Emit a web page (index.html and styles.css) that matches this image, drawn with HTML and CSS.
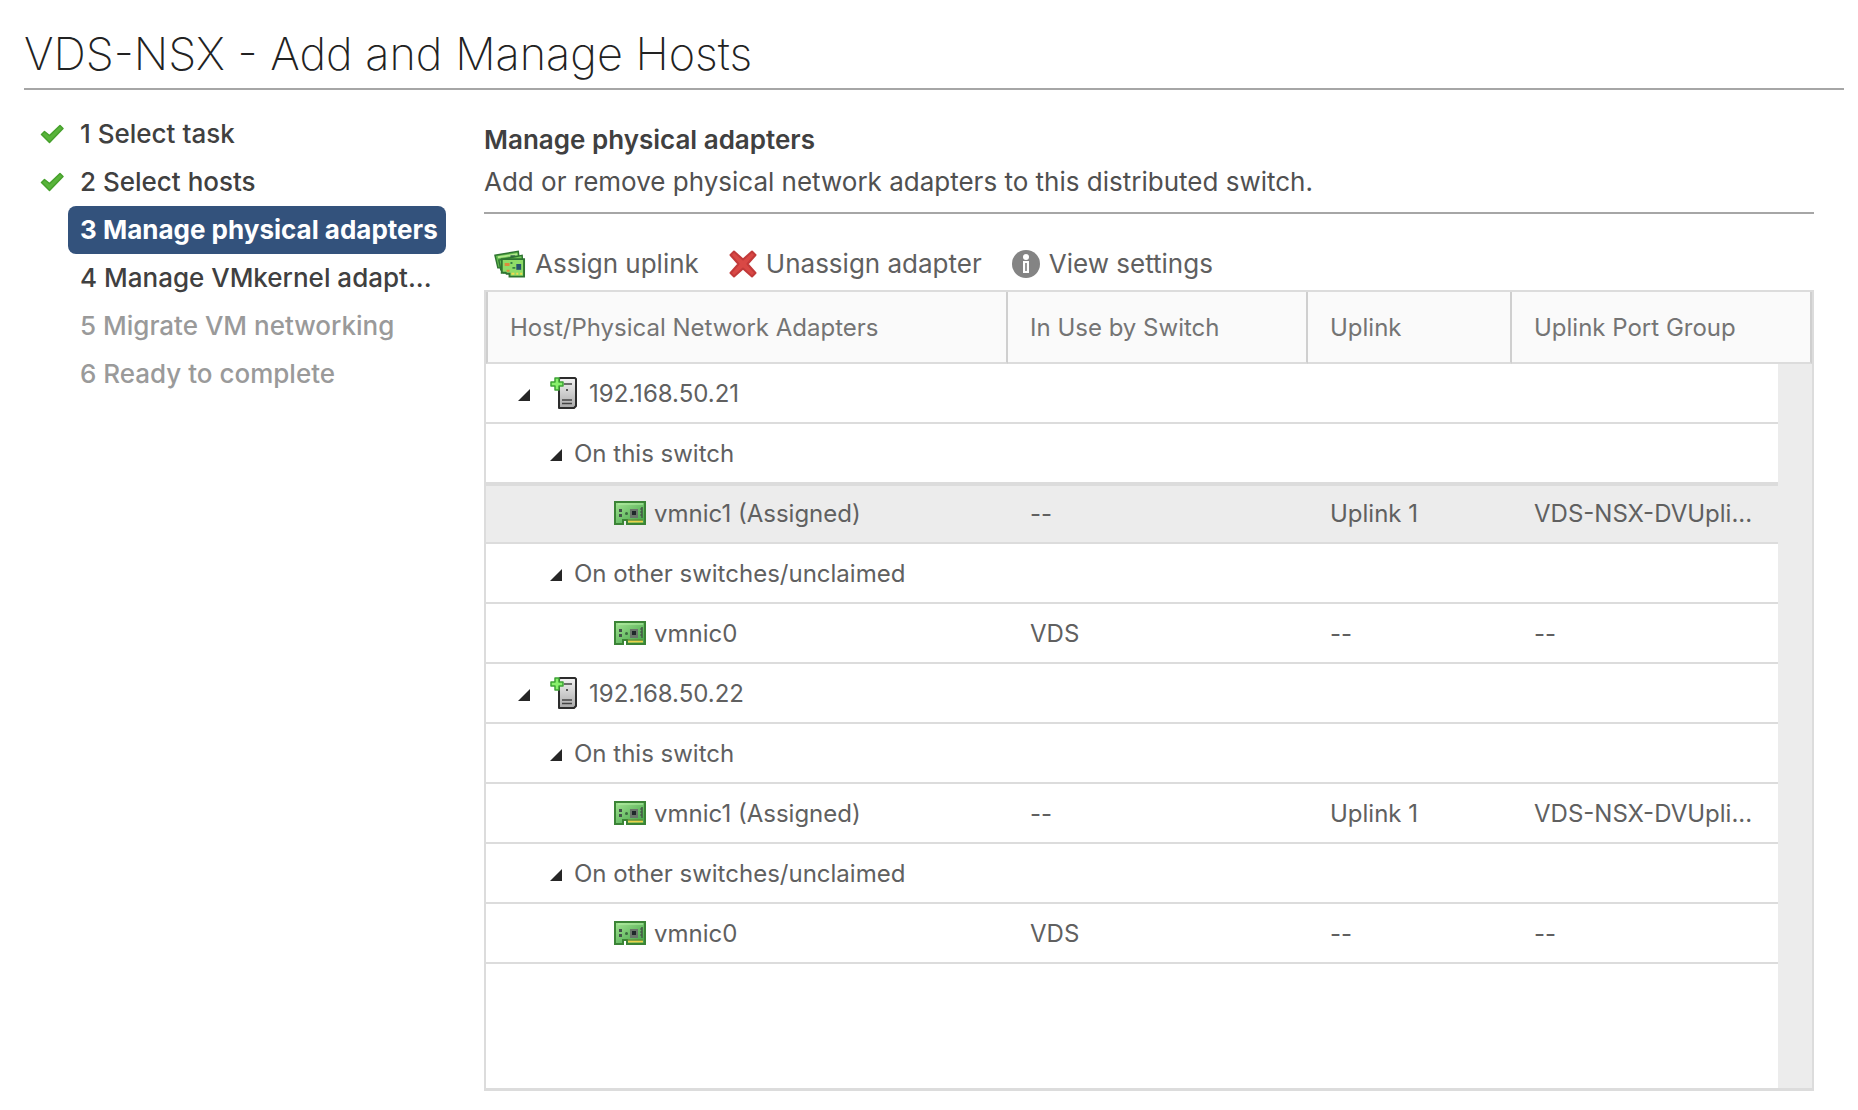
FILE: index.html
```html
<!DOCTYPE html>
<html lang="en">
<head>
<meta charset="utf-8">
<title>VDS-NSX - Add and Manage Hosts</title>
<link rel="stylesheet" href="styles.css">
</head>
<body>
<svg class="sprites" width="0" height="0" aria-hidden="true">
  <defs>
    <linearGradient id="green" x1="0" y1="0" x2="1" y2="1">
      <stop offset="0" stop-color="#a2e391"/><stop offset="1" stop-color="#3fa046"/>
    </linearGradient>
    <linearGradient id="steel" x1="0" y1="0" x2="0" y2="1">
      <stop offset="0" stop-color="#f4f4f4"/><stop offset="1" stop-color="#a9a9a9"/>
    </linearGradient>
    <symbol id="check" viewBox="0 0 24 20">
      <path d="M1.500 10.500 4.500 7.500 9.500 11.500 20 1.500 23 4.500 9.500 18.500z" fill="#58b43a" stroke="#46a02c" stroke-width="1.500" stroke-linejoin="round"/>
    </symbol>
    <symbol id="nic" viewBox="0 0 32 24">
      <path d="M1 1h30v22H13v-4H9v4H1z" fill="url(#green)" stroke="#3b8436" stroke-width="2"/>
      <path d="M4 3h25" stroke="#b6efa6"/>
      <path d="M14 19.500h15v2H14z" fill="#ecd24d"/>
      <path d="M13 19h16" stroke="#62802a"/>
      <path d="M5 8h3v3H5zM5 13h3v3H5z" fill="#44504a"/>
      <circle cx="12.500" cy="12.500" r="1.500" fill="#3c6940"/>
      <path d="M16 8h8v9h-8z" fill="#69756a"/><path d="M18 10h4v4h-4z" fill="#20282b"/>
      <path d="M27 6h2v11h-2z" fill="#4a6f4a"/><path d="M26 8h2M26 11h2M26 14h2" stroke="#44504a"/>
    </symbol>
    <symbol id="host" viewBox="0 0 27 33">
      <path d="M10 2h15l1 1v27l-2 2H9V3z" fill="url(#steel)" stroke="#2c2c2c" stroke-width="2" stroke-linejoin="round"/>
      <path d="M14 8h8M12 24h10M12 27.500h10" stroke="#444" stroke-width="1.500"/>
      <path d="M16 13h2v2h-2z" fill="#555"/>
      <path d="M5 2h4v4h4v4H9v4H5v-4H1V6h4z" fill="#8af06d" stroke="#3ca334" stroke-width="1.500" stroke-linejoin="round"/>
    </symbol>
    <symbol id="nics" viewBox="0 0 33 28">
      <path d="M1 5 25 1l2 16-19 4-1-3H4z" fill="#62bb4e" stroke="#2f7431" stroke-width="1.500"/>
      <path d="M4 7 24 4" stroke="#b4e88e" stroke-width="2"/><path d="M17 5h5v3h-5z" fill="#33664e"/>
      <path d="M5 10 29 5l1 15-20 3-1-3H7z" fill="#72c95a" stroke="#2f7431" stroke-width="1.500"/>
      <path d="M8 9h23v18H16v-3h-3l-1-1H8z" fill="#8fdc68" stroke="#2f7431" stroke-width="2"/>
      <path d="M11 13h5v3h-5zM13 20h3v2h-3z" fill="#dc8a3c"/><path d="M17 12h2v2h-2zM19 17h3v2h-3z" fill="#378145"/>
      <path d="M23 14h5v6h-5z" fill="#27526c"/><path d="M18 24h3M23 24h2M27 24h2" stroke="#f2d94f" stroke-width="2"/>
    </symbol>
    <symbol id="cross" viewBox="0 0 28 28">
      <path d="M5 1.500 14 9.500l9-8L26.500 5l-8 9 8 9L23 26.500l-9-8-9 8L1.500 23l8-9-8-9z" fill="#d94845" stroke="#c23a3a" stroke-width="2" stroke-linejoin="round"/>
    </symbol>
    <symbol id="info" viewBox="0 0 28 28">
      <circle cx="14" cy="14" r="14" fill="#848484"/>
      <circle cx="14" cy="7" r="3" fill="#fff"/><path d="M11 11h6v12h-6z" fill="#fff"/><path d="M13 13h2v8h-2z" fill="#999"/>
    </symbol>
    <symbol id="twist" viewBox="0 0 12 12"><path d="M12 0v12H0z" fill="#262626"/></symbol>
  </defs>
</svg>

<header class="title-bar"><h1>VDS-NSX - Add and Manage Hosts</h1></header>

<div class="wizard">
  <nav aria-label="Wizard steps">
    <ol class="steps">
      <li><svg class="check"><use href="#check"/></svg><a href="#task">1 Select task</a></li>
      <li><svg class="check"><use href="#check"/></svg><a href="#hosts">2 Select hosts</a></li>
      <li><a class="current" href="#physical" aria-current="step">3 Manage physical adapters</a></li>
      <li><a href="#vmkernel">4 Manage VMkernel adapt...</a></li>
      <li><a class="pending" href="#migrate">5 Migrate VM networking</a></li>
      <li><a class="pending" href="#ready">6 Ready to complete</a></li>
    </ol>
  </nav>

  <main>
    <div class="intro">
      <h2>Manage physical adapters</h2>
      <p>Add or remove physical network adapters to this distributed switch.</p>
    </div>
    <div class="toolbar">
      <button type="button"><svg class="nics"><use href="#nics"/></svg>Assign uplink</button>
      <button type="button"><svg class="tool"><use href="#cross"/></svg>Unassign adapter</button>
      <button type="button"><svg class="tool"><use href="#info"/></svg>View settings</button>
    </div>
    <div class="grid">
      <table>
        <colgroup><col class="c-name"><col class="c-switch"><col class="c-uplink"><col><col class="c-gutter"></colgroup>
        <thead>
          <tr><th scope="col">Host/Physical Network Adapters</th><th scope="col">In Use by Switch</th><th scope="col">Uplink</th><th scope="col" colspan="2">Uplink Port Group</th></tr>
        </thead>
        <tbody>
          <tr><td colspan="4"><div class="node host"><button type="button" aria-label="Collapse host"><svg class="twist"><use href="#twist"/></svg></button><svg class="server"><use href="#host"/></svg>192.168.50.21</div></td><td class="gutter" rowspan="11"></td></tr>
          <tr><td colspan="4"><div class="node group"><button type="button" aria-label="Collapse group"><svg class="twist"><use href="#twist"/></svg></button>On this switch</div></td></tr>
          <tr class="selected"><td><div class="node leaf"><svg class="nic"><use href="#nic"/></svg>vmnic1 (Assigned)</div></td><td>--</td><td>Uplink 1</td><td>VDS-NSX-DVUpli...</td></tr>
          <tr><td colspan="4"><div class="node group"><button type="button" aria-label="Collapse group"><svg class="twist"><use href="#twist"/></svg></button>On other switches/unclaimed</div></td></tr>
          <tr><td><div class="node leaf"><svg class="nic"><use href="#nic"/></svg>vmnic0</div></td><td>VDS</td><td>--</td><td>--</td></tr>
          <tr><td colspan="4"><div class="node host"><button type="button" aria-label="Collapse host"><svg class="twist"><use href="#twist"/></svg></button><svg class="server"><use href="#host"/></svg>192.168.50.22</div></td></tr>
          <tr><td colspan="4"><div class="node group"><button type="button" aria-label="Collapse group"><svg class="twist"><use href="#twist"/></svg></button>On this switch</div></td></tr>
          <tr><td><div class="node leaf"><svg class="nic"><use href="#nic"/></svg>vmnic1 (Assigned)</div></td><td>--</td><td>Uplink 1</td><td>VDS-NSX-DVUpli...</td></tr>
          <tr><td colspan="4"><div class="node group"><button type="button" aria-label="Collapse group"><svg class="twist"><use href="#twist"/></svg></button>On other switches/unclaimed</div></td></tr>
          <tr><td><div class="node leaf"><svg class="nic"><use href="#nic"/></svg>vmnic0</div></td><td>VDS</td><td>--</td><td>--</td></tr>
          <tr class="filler"><td colspan="4"></td></tr>
        </tbody>
      </table>
    </div>
  </main>
</div>
</body>
</html>
```
FILE: styles.css
```css
* { box-sizing: border-box; }

body {
  margin: 0;
  padding: 24px 14px 19px 24px;
  background: #fff;
  color: #606060;
  font-family: Inter, "Open Sans", sans-serif;
  font-size: 26px;
  font-weight: 400;
  line-height: 32px;
}

h1, h2, p { margin: 0; }
svg { display: block; flex: none; }
.sprites { position: absolute; }

button {
  display: flex;
  align-items: center;
  padding: 0;
  border: 0;
  background: none;
  color: inherit;
  font: inherit;
  cursor: pointer;
}

.title-bar { border-bottom: 2px solid #a6a6a6; padding-bottom: 4px; }
.title-bar h1 {
  color: #222;
  font-size: 45px;
  font-weight: 200;
  line-height: 60px;
}

.wizard {
  display: grid;
  grid-template-columns: 422px minmax(0, 1fr);
  column-gap: 38px;
  padding-top: 20px;
  padding-right: 30px;
}

.steps { margin: 0; padding: 0; list-style: none; }
.steps li {
  display: grid;
  grid-template-columns: 24px minmax(0, 1fr);
  column-gap: 4px;
  align-items: center;
  padding-left: 16px;
}
.steps a {
  grid-column: 2;
  padding: 8px 0 8px 12px;
  border-radius: 8px;
  color: #404040;
  font-weight: 500;
  text-decoration: none;
  white-space: nowrap;
}
.steps .current { background: #33527c; color: #fff; font-weight: 700; }
.steps .pending { color: #9a9a9a; }
.check { width: 24px; height: 20px; }

.intro {
  display: grid;
  row-gap: 10px;
  padding: 14px 0;
  border-bottom: 2px solid #a6a6a6;
}
.intro h2 { color: #404040; font-size: 26px; font-weight: 600; line-height: 32px; }
.intro p { color: #505050; }

.toolbar { display: flex; gap: 30px; padding: 34px 0 10px 10px; }
.toolbar button { gap: 9px; }
.nics { width: 32px; height: 28px; }
.tool { width: 28px; height: 28px; }

.grid { border: 2px solid #dcdcdc; border-bottom-width: 3px; }
table {
  width: 100%;
  table-layout: fixed;
  border-collapse: separate;
  border-spacing: 0;
}
.c-name { width: 522px; }
.c-switch { width: 300px; }
.c-uplink { width: 204px; }
.c-gutter { width: 34px; }

th {
  height: 72px;
  padding: 2px 22px 0;
  border-right: 2px solid #cfcfcf;
  border-bottom: 2px solid #dcdcdc;
  background: #fafafa;
  color: #747474;
  font-size: 24px;
  font-weight: 400;
  text-align: left;
  white-space: nowrap;
}
th:first-child { border-left: 2px solid #cfcfcf; }
td {
  height: 60px;
  padding: 2px 20px 0 22px;
  border-bottom: 2px solid #dcdcdc;
  font-size: 24px;
  white-space: nowrap;
}
.selected td { background: #ececec; box-shadow: inset 0 2px #dcdcdc; }
.filler td { height: 124px; border-bottom: 0; }
.gutter { background: #ececec; border-bottom: 0; }

.node { display: flex; align-items: center; }
.node.host { padding-left: 10px; }
.node.group { padding-left: 42px; gap: 12px; }
.node.leaf { padding-left: 106px; gap: 8px; }
.node button { padding-top: 2px; }
.twist { width: 12px; height: 12px; }
.server { width: 27px; height: 33px; margin: -4px 12px 0 20px; }
.nic { width: 32px; height: 24px; margin-bottom: 2px; }
```
